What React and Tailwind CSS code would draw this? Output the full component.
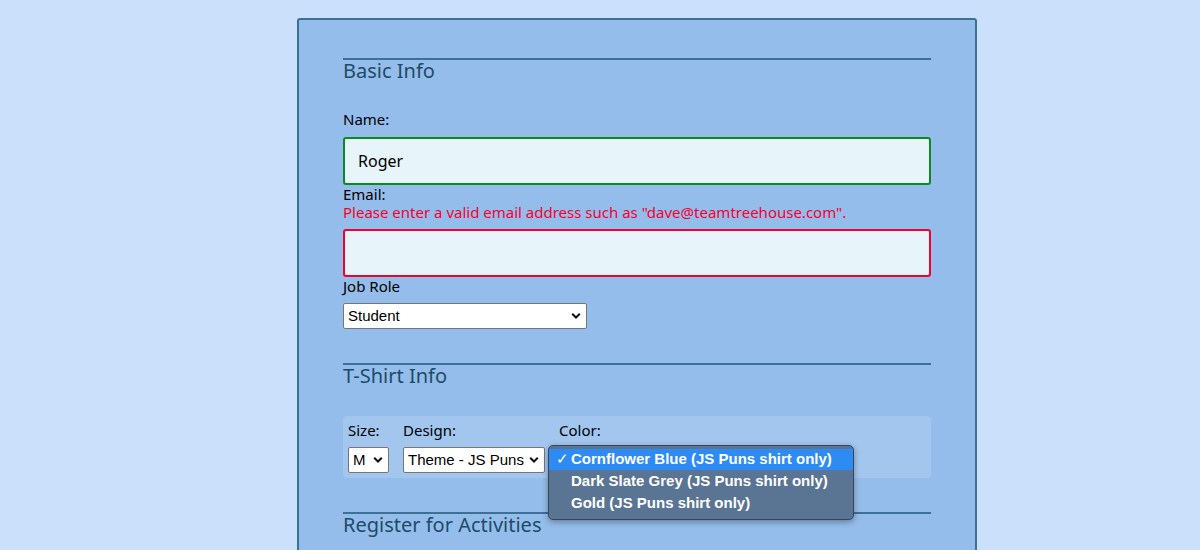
import React from 'react';

const Chevron = () => (
  <svg width="10" height="7" viewBox="0 0 10 7" className="absolute right-[5px] top-1/2 -translate-y-1/2">
    <path d="M1.2 1.3 L5 5 L8.8 1.3" stroke="#111" strokeWidth="2" fill="none" />
  </svg>
);

const FakeSelect = ({ value, className }) => (
  <div className={`relative bg-white border border-[#767676] rounded-[2px] h-[26px] flex items-center pl-[4px] text-[15px] text-black font-['Liberation_Sans',Arial,sans-serif] ${className}`}>
    {value}
    <Chevron />
  </div>
);

const Section = ({ title, children }) => (
  <div>
    <div className="border-t-2 border-[#3b7194]" />
    <h2 className="text-[20px] leading-[24px] text-[#1c4c68] -mt-[1px]">{title}</h2>
    {children}
  </div>
);

export default function App() {
  return (
    <div className="w-[1200px] h-[550px] overflow-hidden bg-[#cbe0fa] font-['Noto_Sans','Lato',sans-serif]">
      <div className="ml-[297px] mt-[18px] w-[680px] h-[560px] border-2 border-[#3b7194] rounded-[3px] bg-[#95bdeb] px-[44px] pt-[38px]">
        <Section title="Basic Info">
          <div className="mt-[27px] text-[15px] leading-[18px] text-black">Name:</div>
          <div className="mt-[9px] h-[48px] border-2 border-[#0a8a20] rounded-[3px] bg-[#e7f4fa] flex items-center pl-[13px] text-[16px] text-black">
            Roger
          </div>
          <div className="text-[15px] leading-[18px] text-black">Email:</div>
          <div className="text-[15px] leading-[18px] text-[#f5002e]">
            Please enter a valid email address such as "dave@teamtreehouse.com".
          </div>
          <div className="mt-[8px] h-[48px] border-2 border-[#f5002e] rounded-[3px] bg-[#e7f4fa]" />
          <div className="text-[15px] leading-[18px] text-black">Job Role</div>
          <FakeSelect value="Student" className="mt-[8px] w-[244px]" />
        </Section>

        <div className="mt-[34px]">
          <Section title="T-Shirt Info">
            <div className="mt-[28px] h-[62px] bg-[#a3c6ef] rounded-[4px] flex gap-[14px] pl-[5px] pt-[5px]">
              <div>
                <div className="text-[15px] leading-[18px] text-black">Size:</div>
                <FakeSelect value="M" className="mt-[8px] w-[41px]" />
              </div>
              <div>
                <div className="text-[15px] leading-[18px] text-black">Design:</div>
                <FakeSelect value="Theme - JS Puns" className="mt-[8px] w-[142px]" />
              </div>
              <div className="relative">
                <div className="text-[15px] leading-[18px] text-black">Color:</div>
                <div className="absolute left-[-11px] top-[24px] w-[306px] h-[75px] rounded-[5px] border border-[#3a4656] bg-[#5a7493] shadow-[0_2px_6px_rgba(0,0,0,0.35)] pt-[3px] font-['Liberation_Sans',Arial,sans-serif] font-bold text-white text-[15px] z-10">
                  <div className="h-[21px] bg-[#2e8bf4] flex items-center">
                    <span className="w-[22px] pl-[7px] font-normal">✓</span>Cornflower Blue (JS Puns shirt only)
                  </div>
                  <div className="h-[22px] flex items-center pl-[22px]">Dark Slate Grey (JS Puns shirt only)</div>
                  <div className="h-[22px] flex items-center pl-[22px]">Gold (JS Puns shirt only)</div>
                </div>
              </div>
            </div>
          </Section>
        </div>

        <div className="mt-[34px]">
          <Section title="Register for Activities" />
        </div>
      </div>
    </div>
  );
}
